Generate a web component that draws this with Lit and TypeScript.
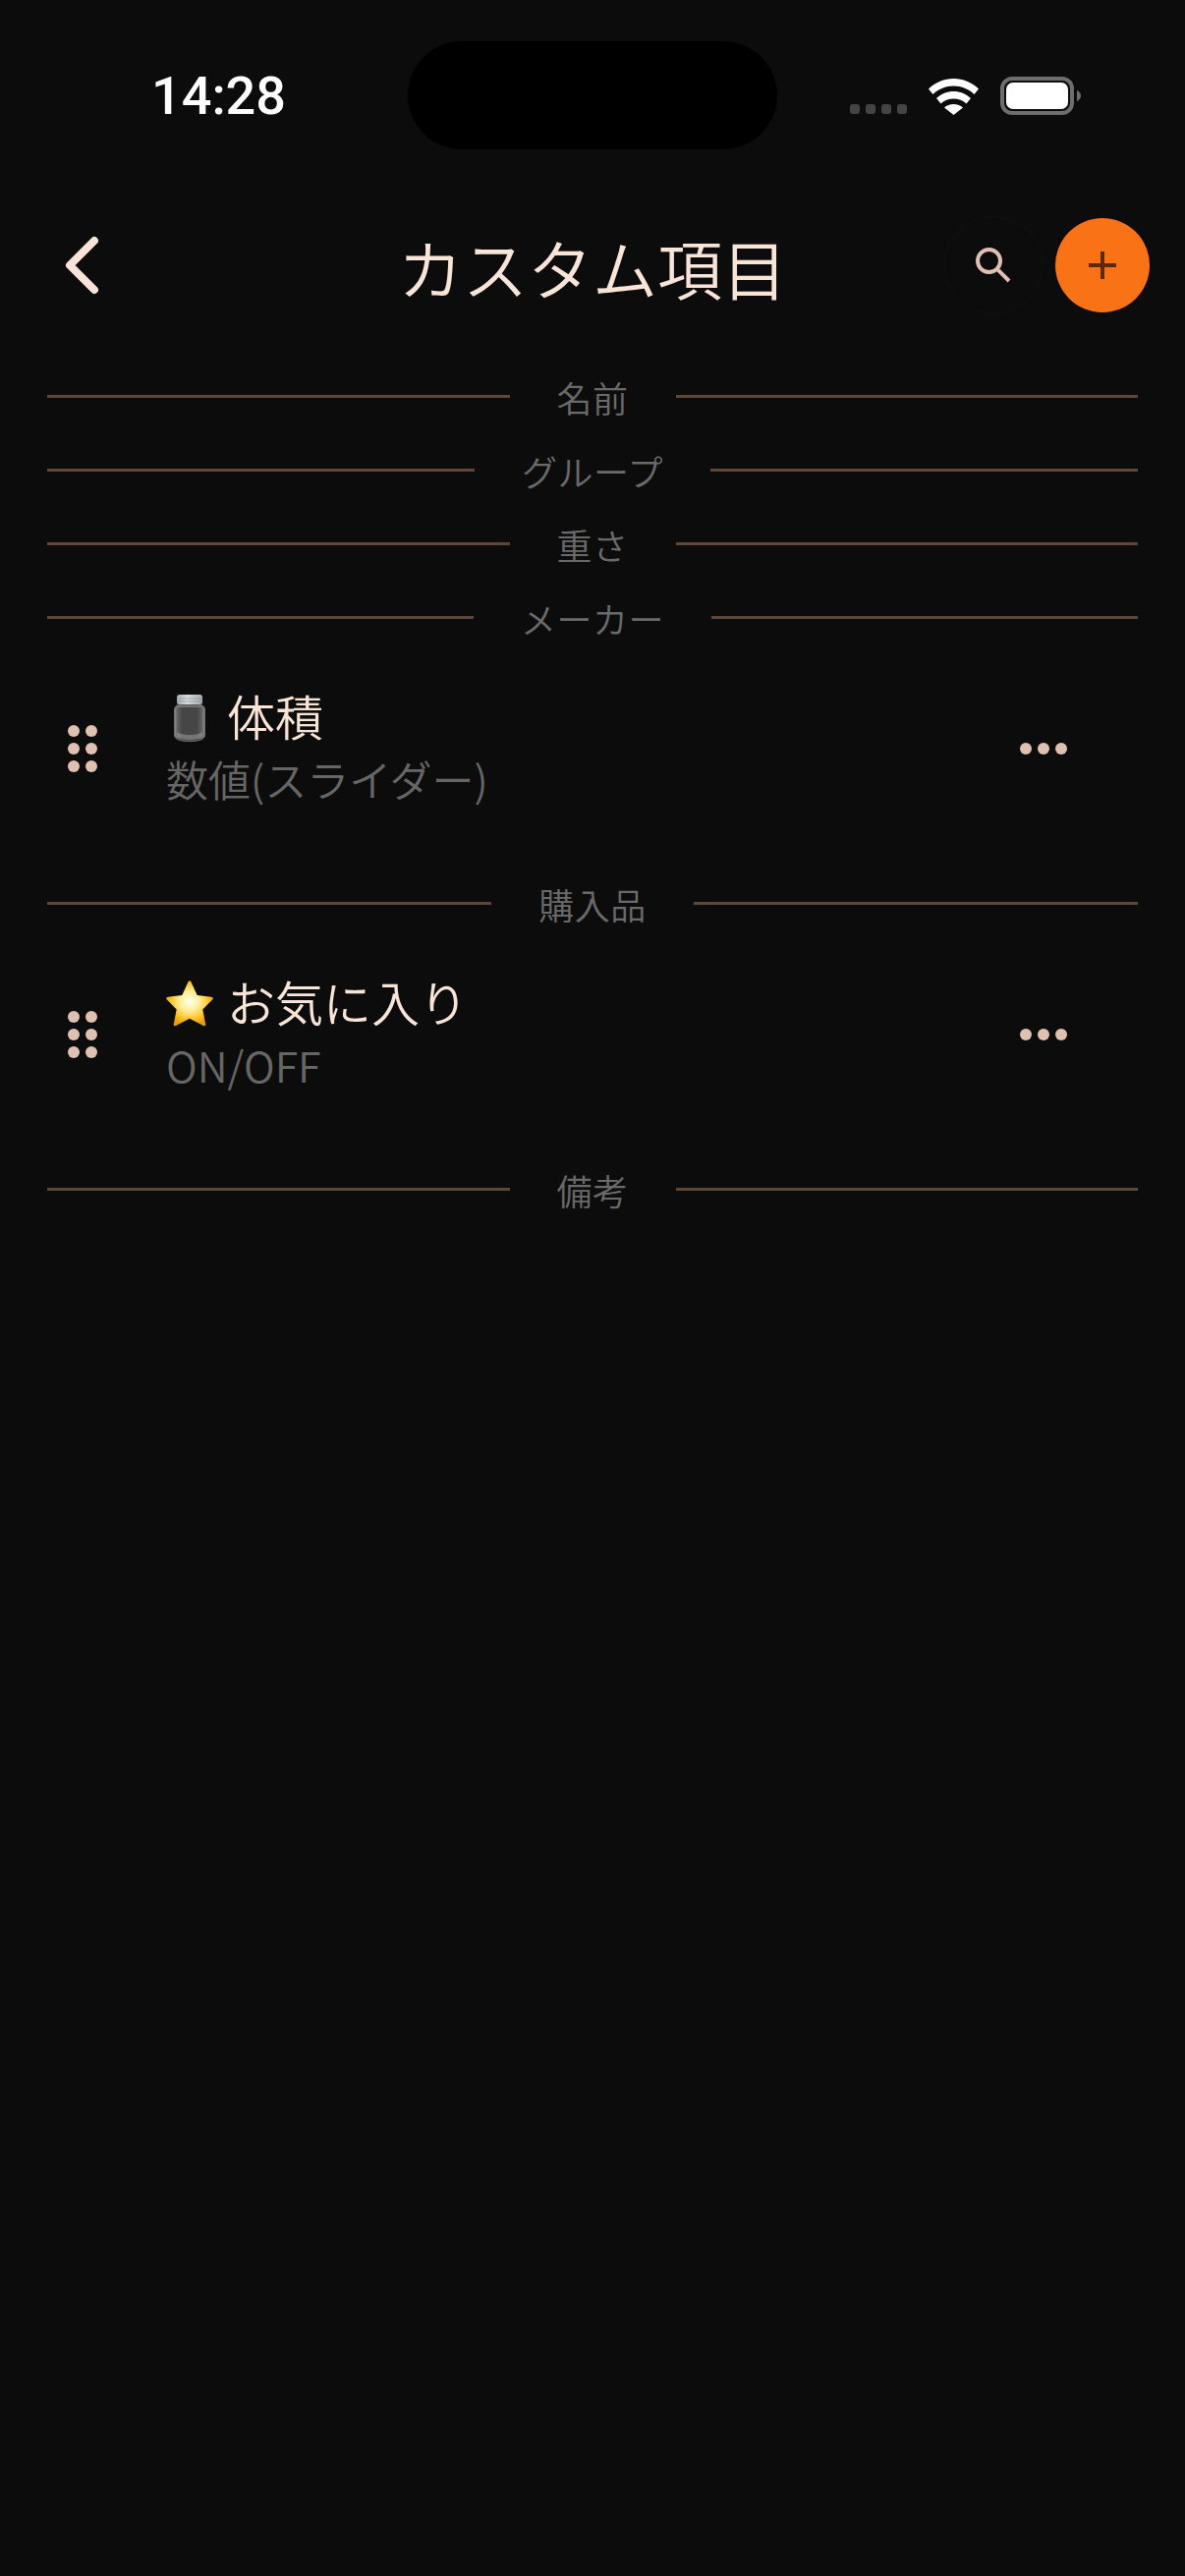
import { LitElement, html, css, svg } from "lit";
import { customElement } from "lit/decorators.js";

type Row = { icon: "jar" | "star"; title: string; sub: string };
type Section = { label: string; rows?: Row[] };

const sections: Section[] = [
  { label: "名前" },
  { label: "グループ" },
  { label: "重さ" },
  {
    label: "メーカー",
    rows: [{ icon: "jar", title: "体積", sub: "数値(スライダー)" }],
  },
  {
    label: "購入品",
    rows: [{ icon: "star", title: "お気に入り", sub: "ON/OFF" }],
  },
  { label: "備考" },
];

const jar = svg`
  <defs>
    <linearGradient id="jarBody" x1="0" x2="1" y1="0" y2="0">
      <stop offset="0" stop-color="#909090"/>
      <stop offset="0.1" stop-color="#626262"/>
      <stop offset="0.25" stop-color="#464646"/>
      <stop offset="0.75" stop-color="#464646"/>
      <stop offset="0.9" stop-color="#626262"/>
      <stop offset="1" stop-color="#909090"/>
    </linearGradient>
    <linearGradient id="jarLid" x1="0" x2="1" y1="0" y2="0">
      <stop offset="0" stop-color="#a2aaaf"/>
      <stop offset="0.4" stop-color="#d6dde1"/>
      <stop offset="1" stop-color="#a0a8ac"/>
    </linearGradient>
  </defs>
  <path d="M.5 16c0-4 2-5 5-6h21c3 1 5 2 5 6v25c0 5-7 6.500-15.500 6.500S.5 46 .5 41z" fill="url(#jarBody)" stroke="#6f6f6f"/>
  <path d="M3 38c4 4 22 4 26 0v5c-4 4-22 4-26 0z" fill="#a4a4a4" opacity=".5"/>
  <path d="M3 11h26v2H3z" fill="#8d8d8d" opacity=".6"/>
  <rect x="3" y="0" width="26" height="10" rx="2.500" fill="url(#jarLid)"/>
  <path d="M4 4h24M4 7h24" stroke="#7f868a" stroke-width=".7" opacity=".7"/>
`;

const star = svg`
  <defs>
    <radialGradient id="starFill" cx="0.5" cy="0.45" r="0.55">
      <stop offset="0" stop-color="#fffef0"/>
      <stop offset="0.38" stop-color="#ffef9a"/>
      <stop offset="0.72" stop-color="#fdc52c"/>
      <stop offset="1" stop-color="#e99a0a"/>
    </radialGradient>
  </defs>
  <path d="M24 0.500c.8 0 1.300.5 1.700 1.400l6 13.200 14.400 1.700c1.700.2 2.200 1.600 1 2.800L37.300 29.500l2.900 14.800c.3 1.600-.9 2.500-2.300 1.700L24 38.700 10.100 46c-1.400.8-2.600-.1-2.300-1.700l2.900-14.800L.9 19.600c-1.200-1.200-.7-2.600 1-2.800l14.400-1.700 6-13.200c.4-.9.900-1.400 1.700-1.400z" fill="url(#starFill)"/>
`;

@customElement("app-root")
export class AppRoot extends LitElement {
  static styles = css`
    :host {
      display: block;
      width: 1206px;
      height: 2622px;
      background: #0c0c0c;
      overflow: hidden;
      font-family: "Noto Sans CJK JP", "Noto Sans", sans-serif;
      font-weight: 350;
      color: #f9e4d8;
    }
    .status {
      display: flex;
      align-items: flex-start;
      height: 152px;
      padding: 42px 0 0 154px;
      box-sizing: border-box;
    }
    .time {
      width: 261px;
      margin-top: 26px;
      font-family: Roboto, sans-serif;
      font-weight: 500;
      font-size: 54px;
      line-height: 60px;
      color: #fff;
    }
    .island {
      width: 376px;
      height: 110px;
      border-radius: 55px;
      background: #000;
    }
    .indicators {
      display: flex;
      align-items: flex-end;
      margin: 36px 0 0 74px;
      height: 39px;
    }
    .signal {
      display: flex;
      gap: 6px;
      margin-bottom: 1px;
    }
    .signal i {
      width: 10px;
      height: 10px;
      border-radius: 3px;
      background: #444;
    }
    .wifi {
      display: block;
      margin: 0 22px;
    }
    .battery {
      display: block;
    }
    .header {
      display: grid;
      grid-template-columns: 1fr auto 1fr;
      align-items: center;
      height: 102px;
      margin-top: 67px;
      padding: 0 36px;
    }
    .back {
      display: block;
      margin-left: 28px;
    }
    .title {
      font-size: 66px;
      line-height: 100px;
      padding-top: 2px;
      white-space: nowrap;
    }
    .actions {
      display: flex;
      align-items: center;
      justify-content: flex-end;
      gap: 13px;
    }
    .search {
      display: flex;
      align-items: center;
      justify-content: center;
      width: 100px;
      height: 100px;
      border-radius: 50%;
      border: 1px solid #121212;
      box-sizing: border-box;
    }
    .add {
      display: flex;
      align-items: center;
      justify-content: center;
      width: 96px;
      height: 96px;
      border-radius: 50%;
      background: #f97316;
    }
    .list {
      margin-top: 45px;
      padding: 0 48px;
    }
    .divider {
      display: flex;
      align-items: center;
      gap: 48px;
      height: 75px;
    }
    .divider::before,
    .divider::after {
      content: "";
      flex: 1;
      height: 3px;
      background: #604638;
    }
    .divider span {
      font-size: 36px;
      letter-spacing: 0.500px;
      line-height: 40px;
      margin-top: 1px;
      color: #6a6a6a;
    }
    .row {
      display: flex;
      align-items: center;
      height: 216px;
      padding: 0 72px 24px 21px;
      box-sizing: border-box;
    }
    .grip {
      display: grid;
      grid-template-columns: repeat(2, 12px);
      gap: 6px;
      margin-right: 70px;
    }
    .grip i,
    .more i {
      width: 12px;
      height: 12px;
      border-radius: 50%;
      background: #e0c0b0;
    }
    .body {
      flex: 1;
      margin-top: -9px;
    }
    .name {
      display: flex;
      align-items: center;
      gap: 14px;
      font-size: 49px;
      line-height: 64px;
    }
    .name svg {
      display: block;
      margin-top: 6px;
    }
    .sub {
      margin-top: 4px;
      font-size: 43px;
      line-height: 56px;
      color: #666;
    }
    .more {
      display: flex;
      gap: 6px;
    }
  `;

  private renderRow(r: Row) {
    return html`
      <div class="row">
        <div class="grip">${[0, 1, 2, 3, 4, 5].map(() => html`<i></i>`)}</div>
        <div class="body">
          <div class="name">
            ${r.icon === "jar"
              ? html`<svg width="48" height="48" viewBox="-8 0 48 48">${jar}</svg>`
              : html`<svg width="48" height="48" viewBox="0 0 48 48">${star}</svg>`}
            <span>${r.title}</span>
          </div>
          <div class="sub">${r.sub}</div>
        </div>
        <div class="more"><i></i><i></i><i></i></div>
      </div>
    `;
  }

  render() {
    return html`
      <div class="status">
        <div class="time">14:28</div>
        <div class="island"></div>
        <div class="indicators">
          <div class="signal"><i></i><i></i><i></i><i></i></div>
          <svg class="wifi" width="51" height="37" viewBox="0 0 51 37">
            <path d="M25.500 0C35 0 44 3.800 51 10.500l-4.500 5.500C40.800 10.500 33.500 7.500 25.500 7.500S10.200 10.500 4.500 16L0 10.500C7 3.800 16 0 25.500 0z" fill="#fff"/>
            <path d="M25.500 13c6.500 0 12.500 2.500 17.500 7l-4.500 5.500c-3.500-3.200-8-5-13-5s-9.500 1.800-13 5L8 20c5-4.500 11-7 17.500-7z" fill="#fff"/>
            <path d="M25.500 26c3.700 0 7 1.300 9.500 3.500L25.500 37 16 29.500c2.500-2.200 5.800-3.500 9.500-3.500z" fill="#fff"/>
          </svg>
          <svg class="battery" width="82" height="39" viewBox="0 0 82 39">
            <rect x="2" y="2" width="71" height="35" rx="10" fill="none" stroke="#6e6e6e" stroke-width="4"/>
            <rect x="6" y="6" width="63" height="27" rx="7" fill="#fff"/>
            <path d="M78 14c2.500 1 4 3 4 5.500S80.500 24 78 25z" fill="#6e6e6e"/>
          </svg>
        </div>
      </div>

      <div class="header">
        <svg class="back" width="40" height="60" viewBox="0 0 40 60">
          <path d="M32 5 7 30l25 25" fill="none" stroke="#f8e3d7" stroke-width="8" stroke-linecap="round" stroke-linejoin="round"/>
        </svg>
        <div class="title">カスタム項目</div>
        <div class="actions">
          <div class="search">
            <svg width="36" height="36" viewBox="0 0 36 36">
              <circle cx="13.500" cy="13.500" r="11.500" fill="none" stroke="#e0c0b0" stroke-width="4"/>
              <path d="M21.500 21.500 34 34" stroke="#e0c0b0" stroke-width="4"/>
            </svg>
          </div>
          <div class="add">
            <svg width="28" height="28" viewBox="0 0 28 28">
              <path d="M14 0v28M0 14h28" stroke="#5c2a0a" stroke-width="4"/>
            </svg>
          </div>
        </div>
      </div>

      <div class="list">
        ${sections.map(
          (s) => html`
            <div class="divider"><span>${s.label}</span></div>
            ${(s.rows ?? []).map((r) => this.renderRow(r))}
          `
        )}
      </div>
    `;
  }
}
